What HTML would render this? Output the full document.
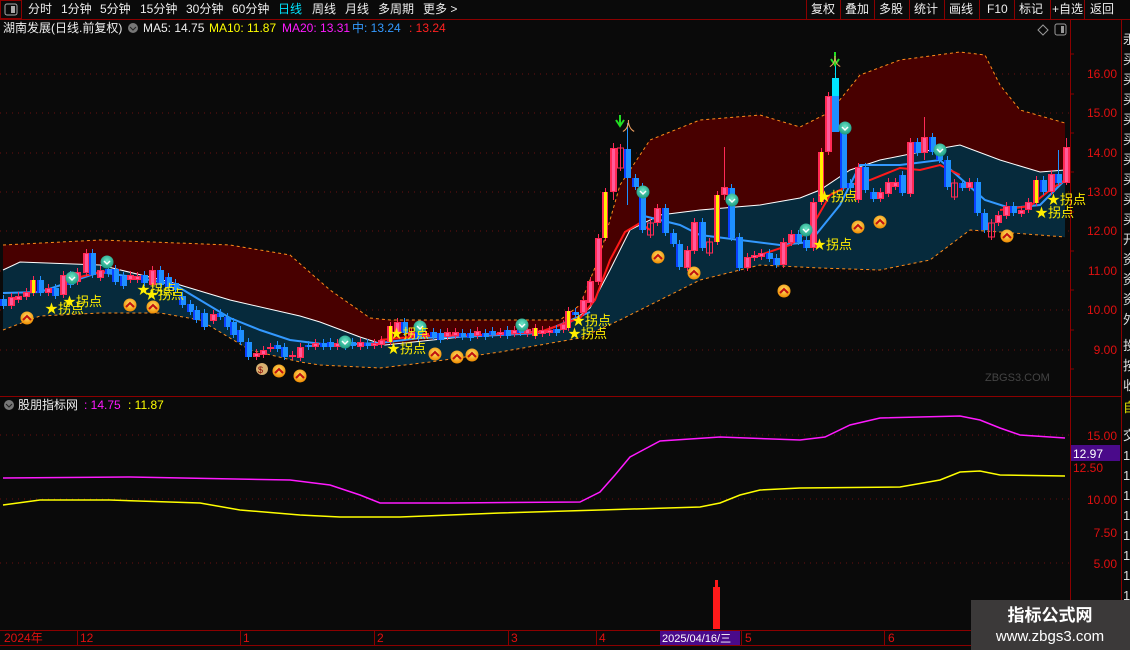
<!DOCTYPE html>
<html><head><meta charset="utf-8"><style>
*{margin:0;padding:0}
body{width:1130px;height:650px;background:#0a0a0a;overflow:hidden;position:relative;font-family:"Liberation Sans","Noto Sans CJK SC",sans-serif;}
.t{position:absolute;white-space:nowrap;font-size:12px;line-height:14px}
</style></head><body>
<svg width="1130" height="650" style="position:absolute;left:0;top:0" font-family="Liberation Sans, Noto Sans CJK SC, sans-serif">
<defs>
<radialGradient id="og" cx="50%" cy="40%" r="60%"><stop offset="0" stop-color="#ffe46a"/><stop offset="1" stop-color="#f08a00"/></radialGradient>
<radialGradient id="tg" cx="50%" cy="40%" r="60%"><stop offset="0" stop-color="#6fe8c8"/><stop offset="1" stop-color="#1a9a80"/></radialGradient>
</defs>
<rect x="0" y="0" width="1130" height="19" fill="#0a0a0a"/>
<line x1="0" y1="19.5" x2="1130" y2="19.5" stroke="#8b0000"/>
<rect x="0.5" y="0.5" width="21" height="18" fill="none" stroke="#8b0000"/>
<rect x="5" y="4" width="12" height="11" rx="2" fill="none" stroke="#aaa"/><rect x="11" y="6" width="4" height="7" fill="#aaa"/>
<g stroke="#8b0000"><line x1="806.5" y1="0" x2="806.5" y2="19"/><line x1="840.5" y1="0" x2="840.5" y2="19"/><line x1="874.5" y1="0" x2="874.5" y2="19"/><line x1="909.5" y1="0" x2="909.5" y2="19"/><line x1="944.5" y1="0" x2="944.5" y2="19"/><line x1="979.5" y1="0" x2="979.5" y2="19"/><line x1="1014.5" y1="0" x2="1014.5" y2="19"/><line x1="1050.5" y1="0" x2="1050.5" y2="19"/><line x1="1084.5" y1="0" x2="1084.5" y2="19"/></g>
<line x1="1070.5" y1="19" x2="1070.5" y2="645" stroke="#8b0000"/>
<line x1="1121.5" y1="19" x2="1121.5" y2="645" stroke="#8b0000"/>
<line x1="0" y1="396.5" x2="1121" y2="396.5" stroke="#8b0000"/>
<line x1="0" y1="630.5" x2="1130" y2="630.5" stroke="#8b0000"/>
<line x1="0" y1="645.5" x2="1130" y2="645.5" stroke="#8b0000"/>
<g stroke="#6a1010" stroke-dasharray="1,5">
<line x1="0" y1="74" x2="1070" y2="74"/><line x1="0" y1="113" x2="1070" y2="113"/><line x1="0" y1="153" x2="1070" y2="153"/><line x1="0" y1="192" x2="1070" y2="192"/><line x1="0" y1="231" x2="1070" y2="231"/><line x1="0" y1="271" x2="1070" y2="271"/><line x1="0" y1="310" x2="1070" y2="310"/><line x1="0" y1="350" x2="1070" y2="350"/>
<line x1="0" y1="435" x2="1070" y2="435"/><line x1="0" y1="499" x2="1070" y2="499"/><line x1="0" y1="563" x2="1070" y2="563"/>
</g>
<path d="M3,245 L100,240 L230,245 L290,255 L330,290 L370,318 L390,320 L560,320 L580,305 L600,255 L620,185 L650,140 L700,120 L760,115 L800,127 L830,112 L860,75 L900,60 L960,52 L985,55 L1000,85 L1020,110 L1065,123 L1065,170 L1040,172 L1000,160 L960,145 L920,152 L880,160 L850,170 L820,190 L800,198 L760,205 L700,210 L660,215 L630,230 L610,270 L590,308 L560,330 L480,335 L385,345 L360,337 L320,322 L300,316 L230,300 L170,282 L100,265 L20,262 L3,270 Z" fill="#480000"/>
<path d="M3,270 L20,262 L100,265 L170,282 L230,300 L300,316 L320,322 L360,337 L385,345 L480,335 L560,330 L590,308 L610,270 L630,230 L660,215 L700,210 L760,205 L800,198 L820,190 L850,170 L880,160 L920,152 L960,145 L1000,160 L1040,172 L1065,170 L1065,237 L1000,232 L970,230 L930,260 L880,270 L820,268 L760,265 L700,280 L660,300 L620,320 L580,338 L540,345 L500,352 L430,362 L380,368 L320,365 L300,362 L250,350 L200,320 L160,313 L100,313 L40,316 L3,330 Z" fill="#062a3c"/>
<g fill="none" stroke="#ff8c1a" stroke-dasharray="3,3" stroke-width="1">
<path d="M3,245 L100,240 L230,245 L290,255 L330,290 L370,318 L390,320 L560,320 L580,305 L600,255 L620,185 L650,140 L700,120 L760,115 L800,127 L830,112 L860,75 L900,60 L960,52 L985,55 L1000,85 L1020,110 L1065,123"/>
<path d="M3,330 L40,316 L100,313 L160,313 L200,320 L250,350 L300,362 L320,365 L380,368 L430,362 L500,352 L540,345 L580,338 L620,320 L660,300 L700,280 L760,265 L820,268 L880,270 L930,260 L970,230 L1000,232 L1065,237"/>
</g>
<path d="M3,270 L20,262 L100,265 L170,282 L230,300 L300,316 L320,322 L360,337 L385,345 L480,335 L560,330 L590,308 L610,270 L630,230 L660,215 L700,210 L760,205 L800,198 L820,190 L850,170 L880,160 L920,152 L960,145 L1000,160 L1040,172 L1065,170" fill="none" stroke="#fff" stroke-width="1"/>
<path d="M3,293 L40,292 L100,272 L140,278 L175,285 L200,300 L230,318 L260,330 L290,340 L330,345 L380,343 L420,338 L480,336 L540,333 L590,312 M640,215 L680,225 L700,235 L740,240 L780,245 L810,242 L840,205 L860,165 L900,165 L940,160 L960,178 L985,200 L1010,208 L1040,205 L1065,180" fill="none" stroke="#3399ff" stroke-width="2"/>
<path d="M60,282 L100,272 L120,270 M380,340 L420,336 L480,335 L540,332 L580,318 L595,300 L610,260 L625,232 L640,223 L650,230 M760,255 L790,245 L810,230 L830,195 L850,185 L870,180 L900,168 L920,170 L940,165 L960,175 M1000,210 L1030,206 L1050,190 L1065,180" fill="none" stroke="#ff1a1a" stroke-width="2"/>
<g id="candles"></g>
<g id="icons"></g>
<polyline fill="none" stroke="#ff1aff" stroke-width="1.5" points="3,478 130,477 290,480 330,485 360,495 380,503 450,503 580,502 600,492 615,475 630,457 660,441 720,437 800,440 825,437 850,425 880,418 960,416 980,420 1000,428 1020,435 1065,438"/>
<polyline fill="none" stroke="#ffff00" stroke-width="1.5" points="3,505 40,500 110,500 200,503 240,510 300,515 340,517 400,517 500,513 600,510 700,507 720,503 740,495 760,490 800,488 900,487 940,480 960,472 980,471 1000,475 1065,476"/>
<rect x="713" y="587" width="7" height="42" fill="#ff1a1a"/><rect x="715" y="580" width="3" height="8" fill="#ff1a1a"/>
<g fill="#e01010" font-size="12" text-anchor="end">
<text x="1117" y="78">16.00</text><text x="1117" y="117">15.00</text><text x="1117" y="157">14.00</text><text x="1117" y="196">13.00</text><text x="1117" y="235">12.00</text><text x="1117" y="275">11.00</text><text x="1117" y="314">10.00</text><text x="1117" y="354">9.00</text>
<text x="1117" y="440">15.00</text><text x="1117" y="504">10.00</text><text x="1117" y="537">7.50</text><text x="1117" y="568">5.00</text>
</g>
<g stroke="#8b0000"><line x1="1070" y1="54" x2="1074" y2="54"/><line x1="1070" y1="94" x2="1074" y2="94"/><line x1="1070" y1="133" x2="1074" y2="133"/><line x1="1070" y1="172" x2="1074" y2="172"/><line x1="1070" y1="212" x2="1074" y2="212"/><line x1="1070" y1="251" x2="1074" y2="251"/><line x1="1070" y1="290" x2="1074" y2="290"/><line x1="1070" y1="330" x2="1074" y2="330"/><line x1="1070" y1="369" x2="1074" y2="369"/></g>
<rect x="1071" y="445" width="49" height="16" fill="#4a0a8a"/>
<text x="1073" y="458" fill="#fff" font-size="12">12.97</text>
<text x="1073" y="472" fill="#e01010" font-size="12">12.50</text>
<g fill="#ddd" font-size="13">
<text x="1123" y="44">汞</text><text x="1123" y="64">买</text><text x="1123" y="84">买</text><text x="1123" y="104">买</text><text x="1123" y="124">买</text><text x="1123" y="144">买</text><text x="1123" y="164">买</text><text x="1123" y="184">买</text><text x="1123" y="204">买</text><text x="1123" y="224">买</text><text x="1123" y="244">开</text><text x="1123" y="264">资</text><text x="1123" y="284">资</text><text x="1123" y="304">资</text><text x="1123" y="324">外</text><text x="1123" y="350">投</text><text x="1123" y="370">按</text><text x="1123" y="390">收</text>
<text x="1123" y="440">交</text><text x="1123" y="460">1</text><text x="1123" y="480">1</text><text x="1123" y="500">1</text><text x="1123" y="520">1</text><text x="1123" y="540">1</text><text x="1123" y="560">1</text><text x="1123" y="580">1</text><text x="1123" y="600">1</text>
</g>
<text x="1123" y="412" fill="#e0e000" font-size="13">自</text>
<g stroke="#8b0000"><line x1="77.5" y1="630" x2="77.5" y2="645"/><line x1="240.5" y1="630" x2="240.5" y2="645"/><line x1="374.5" y1="630" x2="374.5" y2="645"/><line x1="508.5" y1="630" x2="508.5" y2="645"/><line x1="596.5" y1="630" x2="596.5" y2="645"/><line x1="741.5" y1="630" x2="741.5" y2="645"/><line x1="884.5" y1="630" x2="884.5" y2="645"/></g>
<g fill="#e01010" font-size="12"><text x="4" y="642">2024年</text><text x="80" y="642">12</text><text x="243" y="642">1</text><text x="377" y="642">2</text><text x="511" y="642">3</text><text x="599" y="642">4</text><text x="745" y="642">5</text><text x="888" y="642">6</text></g>
<rect x="660" y="631" width="80" height="14" fill="#4a0a8a"/>
<text x="662" y="642" fill="#fff" font-size="11">2025/04/16/三</text>
<rect x="971" y="600" width="159" height="50" fill="#3b3939"/>
<text x="1050" y="621" fill="#fff" font-size="17" font-weight="bold" text-anchor="middle">指标公式网</text>
<text x="1050" y="641" fill="#fff" font-size="15" text-anchor="middle">www.zbgs3.com</text>
<text x="985" y="381" fill="#444" font-size="11">ZBGS3.COM</text>
<path d="M1043,25 L1048,30 L1043,35 L1038,30 Z" fill="none" stroke="#999"/>
<rect x="1055" y="24" width="11" height="11" rx="2" fill="none" stroke="#999"/><rect x="1061" y="26" width="3" height="7" fill="#999"/>
<circle cx="133" cy="28" r="5" fill="#777"/><path d="M130,27 L133,30 L136,27" stroke="#222" fill="none"/>
<circle cx="9" cy="405" r="5" fill="#777"/><path d="M6,404 L9,407 L12,404" stroke="#222" fill="none"/>
</svg>
<div class="t" style="left:28px;top:2px;color:#eee">分时</div>
<div class="t" style="left:61px;top:2px;color:#eee">1分钟</div>
<div class="t" style="left:100px;top:2px;color:#eee">5分钟</div>
<div class="t" style="left:140px;top:2px;color:#eee">15分钟</div>
<div class="t" style="left:186px;top:2px;color:#eee">30分钟</div>
<div class="t" style="left:232px;top:2px;color:#eee">60分钟</div>
<div class="t" style="left:278px;top:2px;color:#00e5ff">日线</div>
<div class="t" style="left:312px;top:2px;color:#eee">周线</div>
<div class="t" style="left:345px;top:2px;color:#eee">月线</div>
<div class="t" style="left:378px;top:2px;color:#eee">多周期</div>
<div class="t" style="left:423px;top:2px;color:#eee">更多 &gt;</div>
<div class="t" style="left:811px;top:2px;color:#eee">复权</div>
<div class="t" style="left:845px;top:2px;color:#eee">叠加</div>
<div class="t" style="left:879px;top:2px;color:#eee">多股</div>
<div class="t" style="left:914px;top:2px;color:#eee">统计</div>
<div class="t" style="left:949px;top:2px;color:#eee">画线</div>
<div class="t" style="left:987px;top:2px;color:#eee">F10</div>
<div class="t" style="left:1019px;top:2px;color:#eee">标记</div>
<div class="t" style="left:1052px;top:2px;color:#eee">+自选</div>
<div class="t" style="left:1090px;top:2px;color:#eee">返回</div>
<div class="t" style="left:3px;top:21px;color:#eee">湖南发展(日线.前复权)</div>
<div class="t" style="left:143px;top:21px;color:#eee">MA5: 14.75</div>
<div class="t" style="left:209px;top:21px;color:#ffff00">MA10: 11.87</div>
<div class="t" style="left:282px;top:21px;color:#ff1aff">MA20: 13.31</div>
<div class="t" style="left:352px;top:21px;color:#3399ff">中: 13.24</div>
<div class="t" style="left:409px;top:21px;color:#ff2020">: 13.24</div>
<div class="t" style="left:18px;top:398px;color:#eee">股朋指标网</div>
<div class="t" style="left:84px;top:398px;color:#ff1aff">: 14.75</div>
<div class="t" style="left:128px;top:398px;color:#ffff00">: 11.87</div>
<script>
var C=[
[3,'b',299,306],[11,'r',297,306],[18,'r',296,300],[26,'r',292,297],[33,'y',280,293],[40,'b',280,293],[48,'r',288,293],[55,'b',288,296],[63,'r',275,295],[70,'b',275,285],[77,'r',272,282],[86,'r',253,273],[92,'b',253,275],[100,'r',270,278],[108,'b',269,274],[115,'b',269,282],[123,'b',276,286],[130,'r',275,280],[137,'r',276,280],[144,'b',275,283],[152,'r',270,285],[160,'b',270,285],[168,'b',277,288],[175,'b',283,290],[182,'b',296,305],[190,'b',304,312],[196,'b',310,320],[204,'b',313,327],[213,'r',314,321],[220,'b',313,317],[227,'b',317,327],[233,'b',322,335],[240,'b',330,342],[248,'b',342,357],[256,'r',353,357],[263,'r',350,355],[270,'r',347,349],[277,'b',345,349],[284,'b',347,357],[292,'r',355,357],[300,'r',347,358],[308,'b',345,347],[315,'r',343,347],[323,'b',343,347],
[330,'b',342,347],[337,'r',343,347],[345,'b',342,347],[352,'b',342,346],[360,'r',342,347],[367,'b',343,346],[374,'r',343,346],[381,'r',340,345],[390,'y',326,342],[397,'r',322,333],[404,'b',322,333],[411,'r',332,336],[418,'b',332,338],[425,'r',333,336],[433,'b',332,337],[440,'b',333,340],[447,'r',332,337],[455,'r',332,336],[462,'b',333,337],[470,'b',333,338],[477,'r',331,336],[485,'b',333,337],[492,'b',331,335],[500,'r',332,335],[507,'b',330,336],[514,'r',330,334],[520,'b',328,333],[527,'r',329,334],[535,'y',328,336],[542,'r',330,334],[549,'r',330,333],[556,'b',329,333],
[563,'r',324,330],[568,'y',311,328],[575,'b',312,315],[583,'r',300,313],[590,'r',281,303],[598,'r',238,282],[605,'y',192,238],[613,'r',148,192,143,200],[620,'o',148,168],[627,'b',149,178,123,205],[635,'b',178,187],[642,'b',187,230],[650,'o',223,235],[657,'r',208,223],[665,'b',208,233],[673,'b',233,244],[679,'b',244,267],[687,'r',250,268],[694,'r',222,251],[702,'b',222,248],[709,'o',242,253],[717,'y',195,242],[724,'r',187,195,147,200],[731,'b',188,238],[739,'b',237,268],[747,'r',257,268],[754,'r',255,258],[761,'r',253,257],[769,'b',253,259],[776,'b',258,265],[783,'r',242,265],[791,'r',234,243],[798,'b',234,242],[806,'b',240,248],[813,'r',202,248],[821,'y',152,202],[828,'r',96,152],[835,'c',78,132,55,132],[843,'b',132,188],[850,'b',183,188],[858,'r',167,200],[865,'b',167,190],[873,'b',192,199],[880,'r',192,199],[888,'r',182,194],[895,'r',182,187],[902,'b',175,193],[910,'r',142,194],[917,'b',142,153],[924,'r',137,153,117,160],[932,'b',137,152],[939,'b',151,160],[947,'b',160,187],[954,'o',183,197],[962,'b',183,188],[969,'r',182,188],[977,'b',182,213],[984,'b',213,230],[991,'o',223,237],[998,'r',215,223],[1006,'r',206,216],[1013,'b',206,213],[1021,'r',210,214],[1028,'r',202,210],[1036,'y',180,203],[1043,'b',180,192],[1051,'r',174,192],[1058,'b',174,183,150,185],[1066,'r',147,183,138,185]];
var s='';
C.forEach(function(c){var x=c[0],t=c[2],b=c[3];if(b-t<2)b=t+2;var wt=c[4]||t-4,wb=c[5]||b+3;
var col=c[1]=='b'?'#1e90ff':c[1]=='c'?'#00e5ff':'#ff2a55';
s+='<line x1="'+(x+.5)+'" y1="'+wt+'" x2="'+(x+.5)+'" y2="'+wb+'" stroke="'+col+'"/>';
if(c[1]=='y'){s+='<rect x="'+(x-3)+'" y="'+t+'" width="6" height="'+(b-t)+'" fill="#ff2a55"/><rect x="'+(x-1)+'" y="'+t+'" width="3" height="'+(b-t)+'" fill="#ffee00"/>';}
else if(c[1]=='o'){s+='<rect x="'+(x-2.5)+'" y="'+t+'" width="6" height="'+(b-t)+'" fill="none" stroke="#ff2a55"/>';}
else if(c[1]=='r'){s+='<rect x="'+(x-3)+'" y="'+t+'" width="7" height="'+(b-t)+'" fill="#ff2a55"/><rect x="'+(x-1)+'" y="'+(t+1)+'" width="3" height="'+Math.max(0,b-t-2)+'" fill="#ff5a9a"/>';}
else if(c[1]=='c'){s+='<rect x="'+(x-3)+'" y="'+t+'" width="7" height="18" fill="#00e5ff"/><rect x="'+(x-3)+'" y="'+(t+18)+'" width="7" height="'+(b-t-18)+'" fill="#1e90ff"/>';}
else{s+='<rect x="'+(x-3)+'" y="'+t+'" width="7" height="'+(b-t)+'" fill="#1e90ff"/><rect x="'+(x-3)+'" y="'+t+'" width="2" height="'+(b-t)+'" fill="#0a40ff"/>';}
});
document.getElementById('candles').innerHTML=s;
var O=[[27,318],[130,305],[153,307],[279,371],[300,376],[435,354],[457,357],[472,355],[658,257],[694,273],[784,291],[858,227],[880,222],[1007,236]];
var T=[[107,262],[345,342],[420,327],[522,325],[643,192],[732,200],[806,230],[845,128],[940,150],[72,278]];
var L=[[50,308],[68,301],[142,289],[150,294],[395,333],[392,348],[577,320],[573,333],[818,244],[823,196],[1040,212],[1052,199]];
var k='';
O.forEach(function(p){k+='<circle cx="'+p[0]+'" cy="'+p[1]+'" r="6.5" fill="url(#og)"/><path d="M'+(p[0]-4)+','+(p[1]+2)+' L'+p[0]+','+(p[1]-2)+' L'+(p[0]+4)+','+(p[1]+2)+'" stroke="#c01010" stroke-width="2" fill="none"/>';});
T.forEach(function(p){k+='<circle cx="'+p[0]+'" cy="'+p[1]+'" r="6.5" fill="url(#tg)"/><path d="M'+(p[0]-3)+','+(p[1]-1)+' L'+p[0]+','+(p[1]+2)+' L'+(p[0]+3)+','+(p[1]-1)+'" stroke="#fff" stroke-width="1.5" fill="none"/>';});
L.forEach(function(p){k+='<text x="'+(p[0]-5)+'" y="'+(p[1]+5)+'" fill="#ffee00" font-size="13">★拐点</text>';});
k+='<circle cx="262" cy="369" r="6" fill="#d8b070"/><text x="258" y="373" font-size="9" fill="#800">$</text>';
k+='<path d="M620,115 L620,125 M616,120 L620,126 L624,120" stroke="#22dd22" stroke-width="2" fill="none"/><text x="622" y="131" fill="#f0a060" font-size="13">人</text>';
k+='<path d="M835,52 L835,64 M831,59 L835,65 L839,59" stroke="#22dd22" stroke-width="2" fill="none"/><text x="829" y="66" fill="#f0a060" font-size="12">人</text>';
document.getElementById('icons').innerHTML=k;
</script>
</body></html>
